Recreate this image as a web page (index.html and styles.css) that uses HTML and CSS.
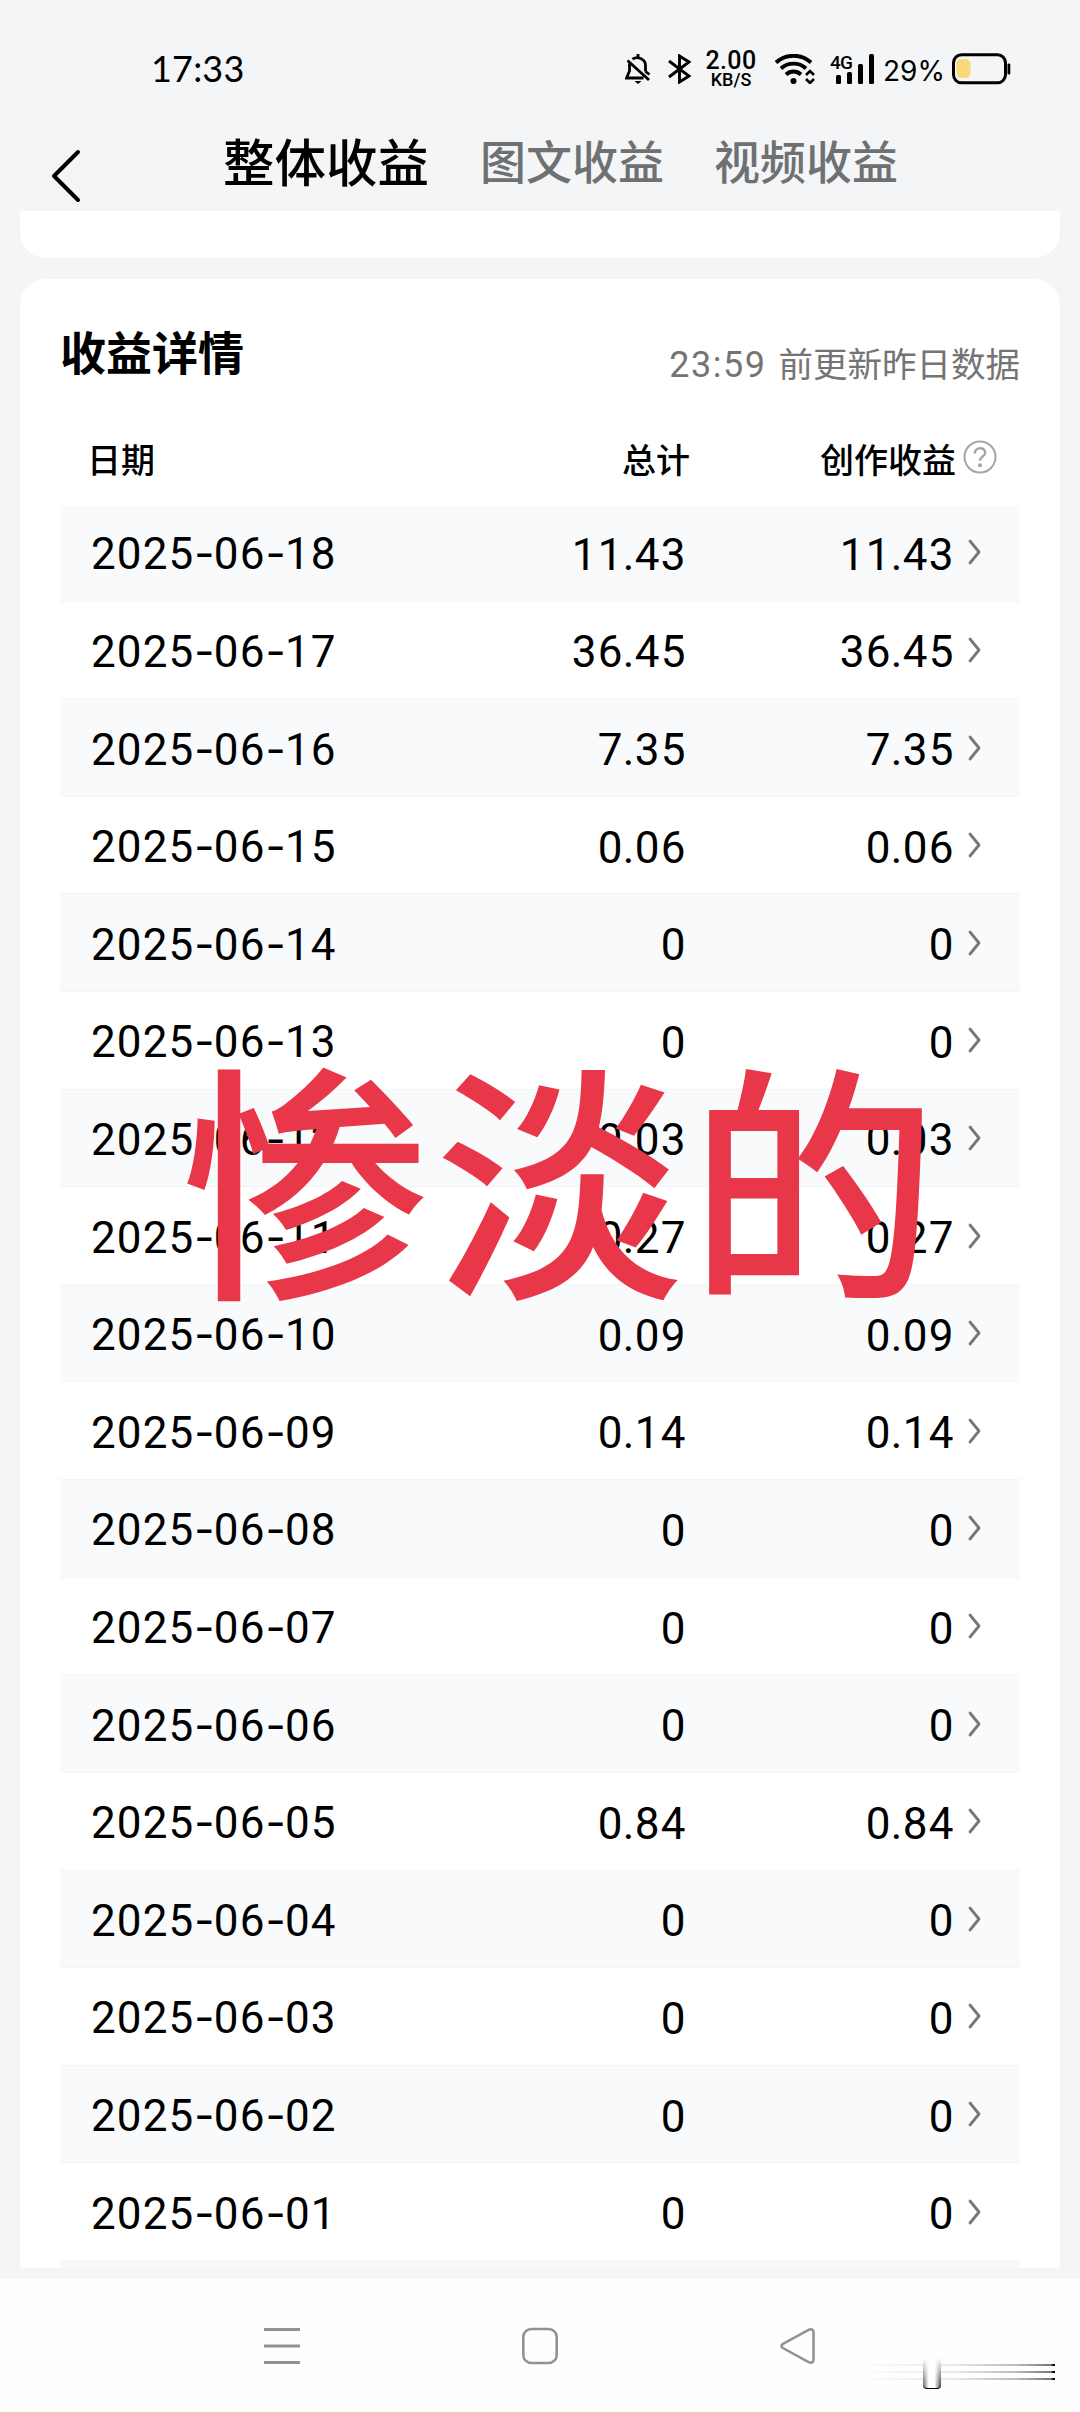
FILE: index.html
```html
<!DOCTYPE html>
<html lang="zh-CN">
<head>
<meta charset="utf-8">
<title>收益详情</title>
<link rel="stylesheet" href="styles.css">
</head>
<body>
<div class="screen">
  <header class="status">
    <span class="clock">17:33</span>
    <svg class="bell" width="26" height="30" viewBox="0 0 26 30" fill="none" stroke="#000" stroke-width="2.8"><path d="M13 0v4M7.5 5.2C12 1.8 20.500 4.500 20.500 11.500v6M4.500 9.500v7.500L1.500 24h17M2.500 6.500L24 26M20.500 17.500L24.500 20.500"/><path d="M9.500 27h7l-3.500 3z" fill="#000" stroke="none"/></svg>
    <svg class="bt" width="23" height="30" viewBox="0 0 23 30" fill="none" stroke="#000" stroke-width="2.900"><path d="M1 7l20 15-9.500 6V2L21 8 1 23"/></svg>
    <span class="speed"><b>2.00</b><i>KB/S</i></span>
    <svg class="wifi" width="40" height="30" viewBox="0 0 40 30" fill="none" stroke="#000" stroke-width="3.900"><path d="M1 8.500C11-.5 26-.5 36 8.500M6 14.500c7-6.500 18-6.500 25 0M11 20.500c4.500-4 10.500-4 15 0"/><circle cx="18.500" cy="27" r="3" fill="#000" stroke="none"/><path d="M31 21l4-4 4 4M31 25l4 4 4-4" stroke-width="2.600"/></svg>
    <span class="cell"><em>4G</em><svg width="40" height="30" viewBox="0 0 40 30"><rect x="2" y="21" width="5" height="9" rx="1.500"/><rect x="13" y="18" width="5" height="12" rx="1.500"/><rect x="24" y="10" width="5" height="20" rx="1.500"/><rect x="35" y="0" width="5" height="30" rx="1.500"/></svg></span>
    <span class="percent">29%</span>
    <svg class="battery" width="60" height="32" viewBox="0 0 60 32"><rect x="1.500" y="1.800" width="52" height="28" rx="8" fill="none" stroke="#000" stroke-width="3"/><rect x="4.500" y="6" width="14" height="19" rx="5" fill="#f9d976"/><rect x="55.500" y="10.500" width="2.800" height="11" rx="1.200"/></svg>
  </header>

  <nav class="tabs">
    <svg class="back" width="30" height="54" viewBox="0 0 30 54" fill="none" stroke="#000" stroke-width="4" stroke-linecap="round" stroke-linejoin="round"><path d="M27 3L3 27l24 24"/></svg>
    <span class="tab active">整体收益</span>
    <span class="tab">图文收益</span>
    <span class="tab">视频收益</span>
  </nav>

  <section class="card previous"></section>

  <main class="card details">
    <div class="heading">
      <h1>收益详情</h1>
      <p><span class="hour">23:59</span>前更新昨日数据</p>
    </div>
    <div class="columns">
      <span class="c-date">日期</span>
      <span class="c-total">总计</span>
      <span class="c-create">创作收益</span>
      <svg width="34" height="34" viewBox="0 0 34 34" fill="none" stroke="#a5a5a5" stroke-width="2"><circle cx="17" cy="17" r="15.500"/><path d="M11.800 13.500c0-7 10.400-7 10.400-.8 0 4-5.200 3.800-5.200 8" stroke-width="2.500"/><circle cx="17" cy="25.200" r="2" fill="#a5a5a5" stroke="none"/></svg>
    </div>
    <div class="rows" id="rows"></div>
    <div class="overlay">惨淡的</div>
  </main>

  <footer class="sysnav">
    <svg width="36" height="38" viewBox="0 0 36 38" stroke="#929292" stroke-width="3"><path d="M0 2.500h36M0 19h36M0 35.500h36"/></svg>
    <svg width="36" height="38" viewBox="0 0 36 38" fill="none" stroke="#929292" stroke-width="2.600"><rect x="1.300" y="2" width="33.400" height="34" rx="8"/></svg>
    <svg width="36" height="38" viewBox="0 0 36 38" fill="none" stroke="#929292" stroke-width="2.600"><path d="M2.500 17.200L29 2.700q4.500-1.500 4.500 2.500v27.600q0 4-4.500 2.500L2.500 20.800q-2-1.800 0-3.600z"/></svg>
    <div class="streaks"><i></i><i></i><i></i><b></b></div>
  </footer>
</div>
<script src="rows.js"></script>
</body>
</html>
```
FILE: styles.css
```css
* { box-sizing: border-box; }
body {
  margin: 0;
  background: #f3f5f7;
  color: #000;
  font-family: Roboto, "Noto Sans CJK SC", sans-serif;
}
.screen {
  width: 1080px;
  height: 2412px;
  display: flex;
  flex-direction: column;
  overflow: hidden;
}
svg { display: block; flex: none; }

/* status bar */
.status {
  height: 124px;
  padding-top: 54px;
  padding-left: 151px;
  display: flex;
  align-items: flex-start;
  flex: none;
}
.clock {
  width: 474px;
  margin-top: -1px;
  font: 36px/30px Lato, sans-serif;
  letter-spacing: 0.2px;
}
.bt { margin-left: 17px; }
.speed {
  width: 50px;
  margin-left: 15px;
  margin-top: -4px;
  display: flex;
  flex-direction: column;
  align-items: center;
}
.speed b { font: 500 25px/22px Roboto, sans-serif; letter-spacing: 0.4px; }
.speed i { font: normal 500 18px/16px Roboto, sans-serif; }
.wifi { margin-left: 19px; }
.cell { position: relative; margin-left: 19px; }
.cell em {
  position: absolute;
  left: -4px;
  top: -1px;
  font: normal 500 19px/19px Roboto, sans-serif;
  letter-spacing: -0.8px;
}
.percent {
  width: 61px;
  margin-left: 9px;
  margin-top: 2px;
  font: 28px/31px Inter, sans-serif;
}
.battery { margin-left: 8px; margin-top: -1px; }

/* tabs */
.tabs {
  height: 87px;
  padding-left: 51px;
  display: flex;
  align-items: flex-start;
  flex: none;
}
.back { margin-top: 25px; }
.tab {
  margin-left: 50px;
  margin-top: 6px;
  font-size: 46px;
  line-height: 66px;
  font-weight: 500;
  color: #6f7072;
  white-space: nowrap;
}
.tab.active {
  margin-left: 142px;
  font-size: 51.500px;
  margin-top: 8px;
  margin-right: 1px;
  color: #000;
}

/* cards */
.card { margin: 0 20px; background: #fff; flex: none; }
.previous { height: 47px; border-radius: 0 0 26px 26px; margin-bottom: 21px; }
.details {
  position: relative;
  height: 1989px;
  padding: 0 40px;
  border-radius: 26px 26px 0 0;
  overflow: hidden;
}
.heading {
  height: 147px;
  padding-top: 42px;
  display: flex;
  justify-content: space-between;
}
h1 { margin: 0; font-size: 46px; line-height: 66px; font-weight: 700; }
p { margin: 20px 0 0; font-size: 34.500px; line-height: 48px; color: #747474; }
.hour { font-size: 36px; letter-spacing: 1.500px; margin-right: 12px; }
.columns {
  height: 80px;
  padding-top: 11px;
  padding-left: 27px;
  display: flex;
  align-items: flex-start;
  font-size: 34px;
  line-height: 48px;
  font-weight: 500;
}
.columns span { white-space: nowrap; }
.c-date { width: 260px; }
.c-total { width: 343px; text-align: right; }
.c-create { width: 266px; text-align: right; }
.columns svg { margin: 3px 0 0 7px; }

.rows { display: flex; flex-direction: column; }
.row {
  height: 97.620px;
  flex: none;
  display: flex;
  align-items: center;
  padding: 4px 0 0 31px;
  border-bottom: 1px solid #f3f5f6;
  font-size: 44px;
  line-height: 50px;
  letter-spacing: 1.1px;
}
.row:first-child { height: 95.620px; padding-top: 2px; }
.row:nth-child(odd) { background: #f9fafc; }
.date { width: 290px; }
.dash {
  display: inline-block;
  width: 19.500px;
  font-family: Inter, sans-serif;
  letter-spacing: 0;
  line-height: 40px;
  text-align: center;
}
.dot { margin: 0 -0.700px; }
.total { width: 305.500px; padding-top: 1px; text-align: right; }
.create { width: 268px; padding-top: 1px; text-align: right; }
.row svg { margin: -4px 0 0 12px; }

.overlay {
  position: absolute;
  left: 161px;
  top: 731px;
  font-size: 249px;
  line-height: 370px;
  font-weight: 500;
  letter-spacing: 5px;
  color: #e83748;
  white-space: nowrap;
}

/* system navigation */
.sysnav {
  position: relative;
  margin-top: 11px;
  flex: 1;
  padding: 48px 264px 0;
  display: flex;
  justify-content: space-between;
  align-items: flex-start;
  background: #fefefe;
}
.streaks {
  position: absolute;
  left: 856px;
  top: 79px;
  width: 199px;
  height: 32px;
}
.streaks i {
  display: block;
  height: 2px;
  margin-bottom: 5px;
  background: linear-gradient(90deg, transparent, #e8e8e8 50%, #bbb 80%, #777 98%, #000 99%);
}
.streaks i:first-child { margin-top: 6px; }
.streaks b {
  position: absolute;
  left: 67px;
  top: 0;
  width: 18px;
  height: 31px;
  border-radius: 0 0 4px 4px;
  border-bottom: 1px solid #000;
  background: linear-gradient(#fefefe, transparent), linear-gradient(90deg, #555, #fff 32%, #fff 65%, #333);
}
```
FILE: rows.js
```js
const earnings = [
  ["2025-06-18", "11.43"], ["2025-06-17", "36.45"], ["2025-06-16", "7.35"],
  ["2025-06-15", "0.06"], ["2025-06-14", "0"], ["2025-06-13", "0"],
  ["2025-06-12", "0.03"], ["2025-06-11", "0.27"], ["2025-06-10", "0.09"],
  ["2025-06-09", "0.14"], ["2025-06-08", "0"], ["2025-06-07", "0"],
  ["2025-06-06", "0"], ["2025-06-05", "0.84"], ["2025-06-04", "0"],
  ["2025-06-03", "0"], ["2025-06-02", "0"], ["2025-06-01", "0"]
];
const arrow = '<svg width="15" height="28" viewBox="0 0 15 28" fill="none" stroke="#777" stroke-width="2.800" stroke-linecap="round" stroke-linejoin="round"><path d="M3 3l9 11-9 11"/></svg>';
const spaced = text => text
  .replace(/-/g, '<span class="dash">-</span>')
  .replace(/(\d)\.(\d)/, '$1<span class="dot">.</span>$2');
document.getElementById("rows").innerHTML = earnings.map(([date, value]) =>
  `<div class="row"><span class="date">${spaced(date)}</span><span class="total">${spaced(value)}</span><span class="create">${spaced(value)}</span>${arrow}</div>`
).join("") + '<div class="row"></div>';
```
